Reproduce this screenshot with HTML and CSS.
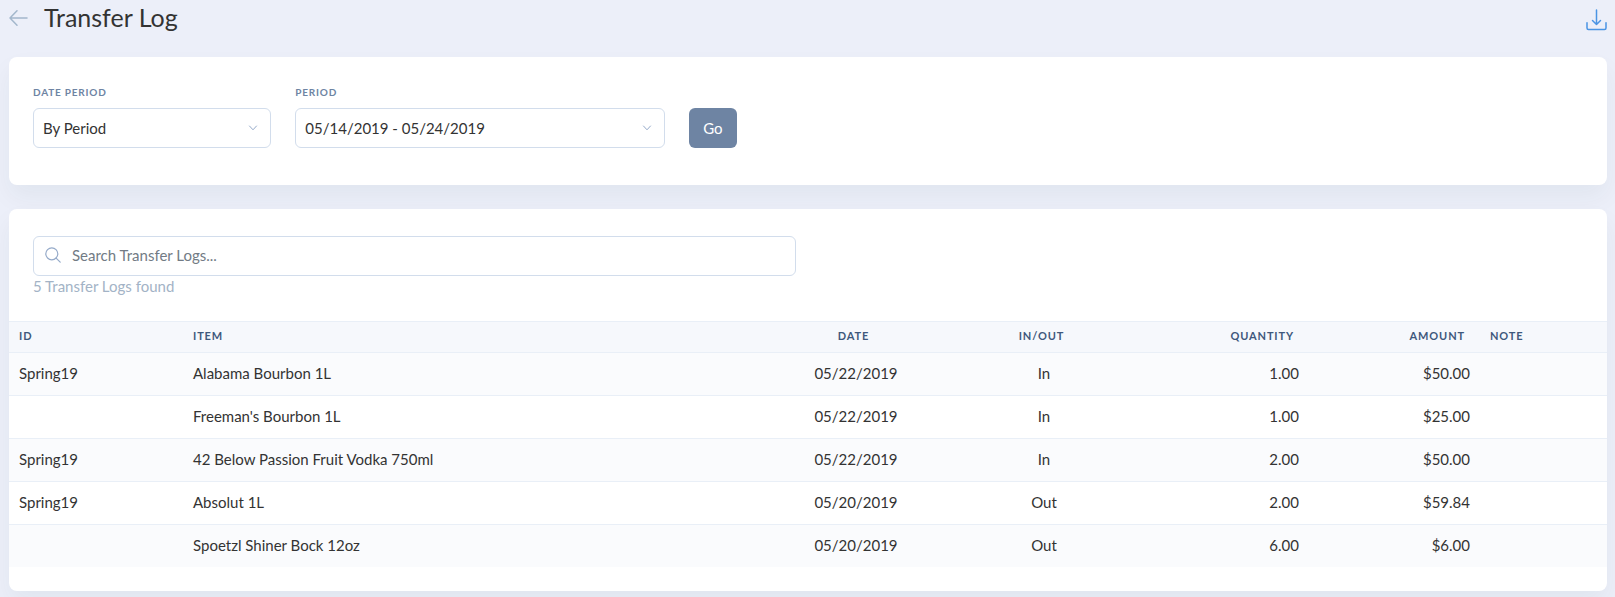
FILE: index.html
```html
<!DOCTYPE html>
<html lang="en">
<head>
<meta charset="utf-8">
<meta name="viewport" content="width=device-width, initial-scale=1">
<title>Transfer Log</title>
<link rel="stylesheet" href="styles.css">
</head>
<body>
<header class="page-header">
  <a class="back" href="#" aria-label="Back">
    <svg width="20" height="18" viewBox="0 0 20 18" fill="none" stroke="currentColor" stroke-width="1.5" stroke-linecap="round" stroke-linejoin="round"><path d="M18 9H1M8 1.800L1 9l7 7.200"/></svg>
  </a>
  <h1 class="title">Transfer Log</h1>
  <button class="download" type="button" aria-label="Download">
    <svg width="21" height="22" viewBox="0 0 21 22" fill="none" stroke="currentColor" stroke-width="1.5" stroke-linecap="round" stroke-linejoin="round"><path d="M10.500 1v14.500M6.500 11.500l4 4 4-4M1 13.700v5.300a1.500 1.500 0 0 0 1.500 1.500h16a1.500 1.500 0 0 0 1.500-1.500v-5.300"/></svg>
  </button>
</header>
<main>
  <form class="card filters">
    <div class="field field-type">
      <label class="label" for="date-period">Date Period</label>
      <div class="select-wrap">
        <select class="control" id="date-period"><option>By Period</option></select>
        <svg class="chevron" width="10" height="6" viewBox="0 0 10 6" fill="none" stroke="currentColor" stroke-linecap="round" stroke-linejoin="round"><path d="M1.500 1L5 4.800 8.500 1"/></svg>
      </div>
    </div>
    <div class="field field-range">
      <label class="label" for="period">Period</label>
      <div class="select-wrap">
        <select class="control" id="period"><option>05/14/2019 - 05/24/2019</option></select>
        <svg class="chevron" width="10" height="6" viewBox="0 0 10 6" fill="none" stroke="currentColor" stroke-linecap="round" stroke-linejoin="round"><path d="M1.500 1L5 4.800 8.500 1"/></svg>
      </div>
    </div>
    <button class="go" type="submit">Go</button>
  </form>

  <section class="card log">
    <div class="search-row">
      <div class="search">
        <label class="search-box">
          <svg width="16" height="16" viewBox="0 0 16 16" fill="none" stroke="currentColor" stroke-width="1.200" stroke-linecap="round"><circle cx="6.800" cy="6.800" r="6"/><path d="M11.100 11.100L15.200 15.200"/></svg>
          <input class="search-input" type="search" placeholder="Search Transfer Logs..." aria-label="Search Transfer Logs">
        </label>
        <p class="count">5 Transfer Logs found</p>
      </div>
    </div>
    <table class="table">
      <colgroup><col class="c-id"><col class="c-item"><col class="c-mid"><col class="c-mid"><col class="c-num"><col class="c-num"><col class="c-note"></colgroup>
      <thead>
        <tr><th>ID</th><th>Item</th><th class="center">Date</th><th class="center">In/Out</th><th class="right">Quantity</th><th class="right">Amount</th><th>Note</th></tr>
      </thead>
      <tbody>
        <tr><td>Spring19</td><td>Alabama Bourbon 1L</td><td class="center">05/22/2019</td><td class="center">In</td><td class="right">1.00</td><td class="right">$50.00</td><td></td></tr>
        <tr><td></td><td>Freeman's Bourbon 1L</td><td class="center">05/22/2019</td><td class="center">In</td><td class="right">1.00</td><td class="right">$25.00</td><td></td></tr>
        <tr><td>Spring19</td><td>42 Below Passion Fruit Vodka 750ml</td><td class="center">05/22/2019</td><td class="center">In</td><td class="right">2.00</td><td class="right">$50.00</td><td></td></tr>
        <tr><td>Spring19</td><td>Absolut 1L</td><td class="center">05/20/2019</td><td class="center">Out</td><td class="right">2.00</td><td class="right">$59.84</td><td></td></tr>
        <tr><td></td><td>Spoetzl Shiner Bock 12oz</td><td class="center">05/20/2019</td><td class="center">Out</td><td class="right">6.00</td><td class="right">$6.00</td><td></td></tr>
      </tbody>
    </table>
  </section>
</main>
</body>
</html>
```
FILE: styles.css
```css
* { box-sizing: border-box; }
body {
  margin: 0;
  padding: 0 8px 7px 9px;
  background: #eceff9;
  color: #333;
  font: 15px/24px Lato, "Liberation Sans", sans-serif;
}
input, select, button { font: inherit; color: inherit; }

.page-header { display: flex; align-items: center; height: 36px; margin-bottom: 21px; }
.back { display: flex; color: #a3b7cc; }
.title { margin: 0 auto 0 15px; padding-bottom: 2px; font-size: 25px; line-height: 34px; font-weight: 400; }
.download { display: flex; margin-top: 4px; padding: 0; border: 0; background: none; color: #4a94e4; }

.card {
  background: #fff;
  border-radius: 8px;
  box-shadow: 0 12px 24px rgba(18, 60, 63, 0.05);
  margin-bottom: 24px;
}
.filters {
  display: grid;
  grid-template-columns: repeat(12, minmax(0, 1fr));
  column-gap: 24px;
  align-items: end;
  padding: 24px 24px 37px;
}
.field-type { grid-column: span 2; }
.field-range { grid-column: span 3; }
.label {
  display: block;
  margin-bottom: 5px;
  font-size: 10px;
  line-height: 22px;
  font-weight: 700;
  letter-spacing: 0.08em;
  text-transform: uppercase;
  color: #6e84a3;
}
.select-wrap { position: relative; }
.control {
  display: block;
  width: 100%;
  height: 40px;
  padding: 0 32px 0 9px;
  border: 1px solid #d2ddec;
  border-radius: 6px;
  background: #fff;
  appearance: none;
}
.chevron { position: absolute; right: 13px; top: 17px; color: #95aac9; pointer-events: none; }
.go {
  justify-self: start;
  width: 48px;
  height: 40px;
  padding: 0;
  border: 0;
  border-radius: 6px;
  background: #6e84a3;
  color: #fff;
}

.log { margin-bottom: 0; padding-bottom: 24px; }
.search-row {
  display: grid;
  grid-template-columns: 1fr 1fr;
  column-gap: 24px;
  padding: 27px 24px 22px;
}
.search-box {
  display: flex;
  align-items: center;
  gap: 11px;
  height: 40px;
  padding: 0 11px 2px;
  border: 1px solid #d2ddec;
  border-radius: 6px;
  color: #95aac9;
}
.search-input { flex: 1; min-width: 0; padding: 0; border: 0; outline: 0; background: none; color: #333; appearance: none; }
.search-input::placeholder { color: #727b85; opacity: 1; }
.count { margin: 0; padding-bottom: 2px; line-height: 21px; color: #a3b3c6; }

.table { width: 100%; table-layout: fixed; border-collapse: separate; border-spacing: 0; }
.c-id { width: 174px; }
.c-mid { width: 188px; }
.c-num { width: 171px; }
.c-note { width: 127px; }
th {
  height: 31px;
  padding: 0 10px 2px;
  border-top: 1px solid #e9eff7;
  background: #f6f8fc;
  font-size: 11px;
  line-height: 16px;
  font-weight: 700;
  letter-spacing: 0.08em;
  text-align: left;
  text-transform: uppercase;
  color: #3f587c;
}
td { height: 43px; padding: 0 10px 3px; border-top: 1px solid #e9eff7; }
tbody tr:nth-child(odd) { background: #fafbfd; }
.center { text-align: center; }
.right { text-align: right; }
th.center, th.right { padding-right: 15px; }
```
